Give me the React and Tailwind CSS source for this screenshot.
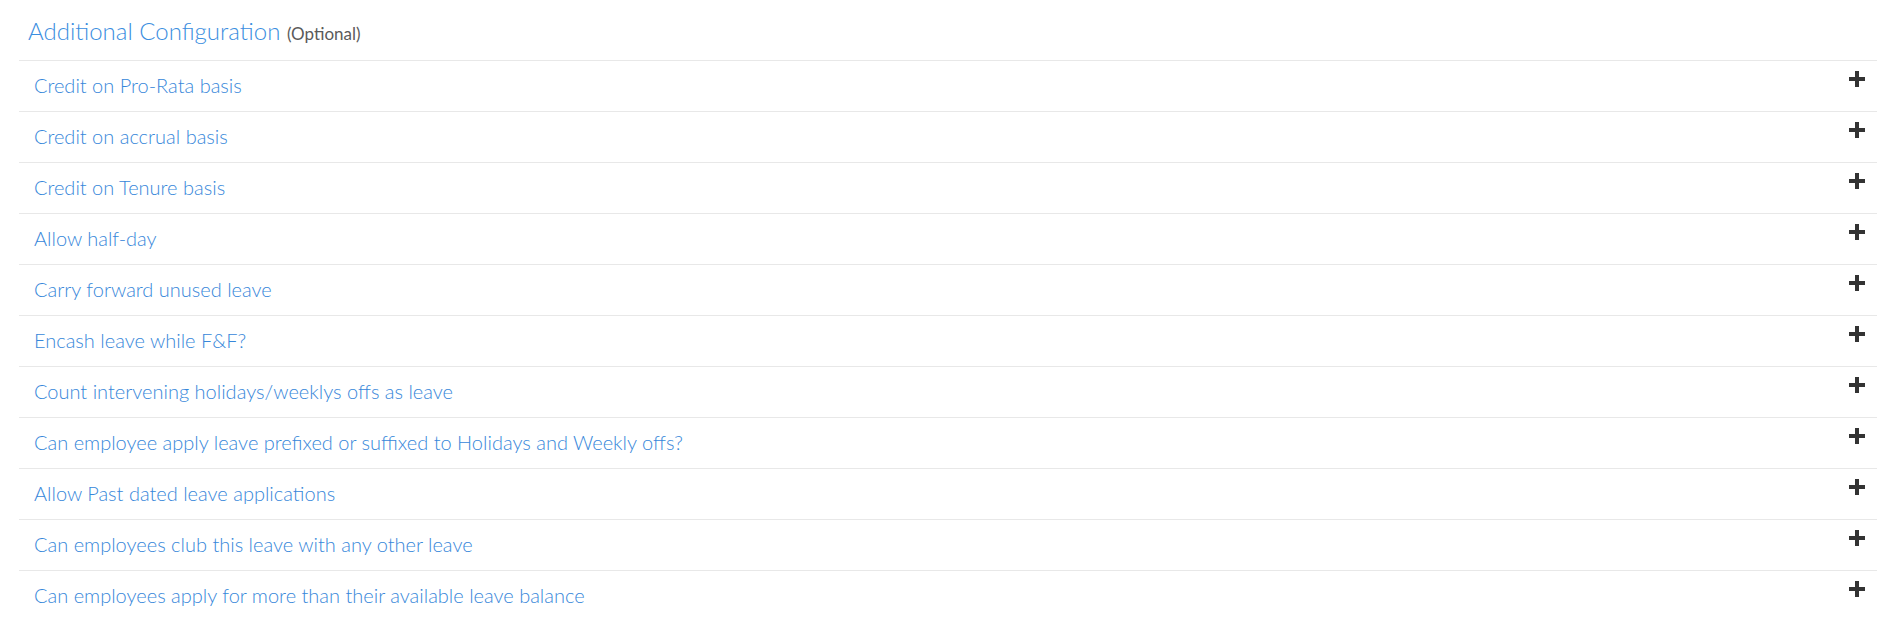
const items = [
  "Credit on Pro-Rata basis",
  "Credit on accrual basis",
  "Credit on Tenure basis",
  "Allow half-day",
  "Carry forward unused leave",
  "Encash leave while F&F?",
  "Count intervening holidays/weeklys offs as leave",
  "Can employee apply leave prefixed or suffixed to Holidays and Weekly offs?",
  "Allow Past dated leave applications",
  "Can employees club this leave with any other leave",
  "Can employees apply for more than their available leave balance",
];

function PlusIcon() {
  return (
    <svg width="16" height="16" viewBox="0 0 16 16" className="block">
      <rect x="6" y="0" width="4" height="16" fill="#333333" />
      <rect x="0" y="6" width="16" height="4" fill="#333333" />
    </svg>
  );
}

export default function App() {
  return (
    <div className="min-h-[641px] bg-white pl-[19px] font-['Lato',sans-serif]">
      {/* Header */}
      <div className="pl-[9px] pt-[13px] pb-[8px]">
        <h3 className="text-[24px] leading-[36px] font-light text-[#3b8ee0]">
          Additional Configuration{" "}
          <span className="text-[17px] font-normal text-[#5a5a5a]">(Optional)</span>
        </h3>
      </div>

      {/* Config rows */}
      <div>
        {items.map((label) => (
          <div
            key={label}
            className="flex items-start justify-between border-t border-[#e8e8e8] pl-[15px] pr-[12px] pt-[14px] pb-[16px]"
          >
            <span className="text-[20px] leading-[20px] font-light text-[#3787da]">{label}</span>
            <span className="-mt-[4px]">
              <PlusIcon />
            </span>
          </div>
        ))}
      </div>
    </div>
  );
}
